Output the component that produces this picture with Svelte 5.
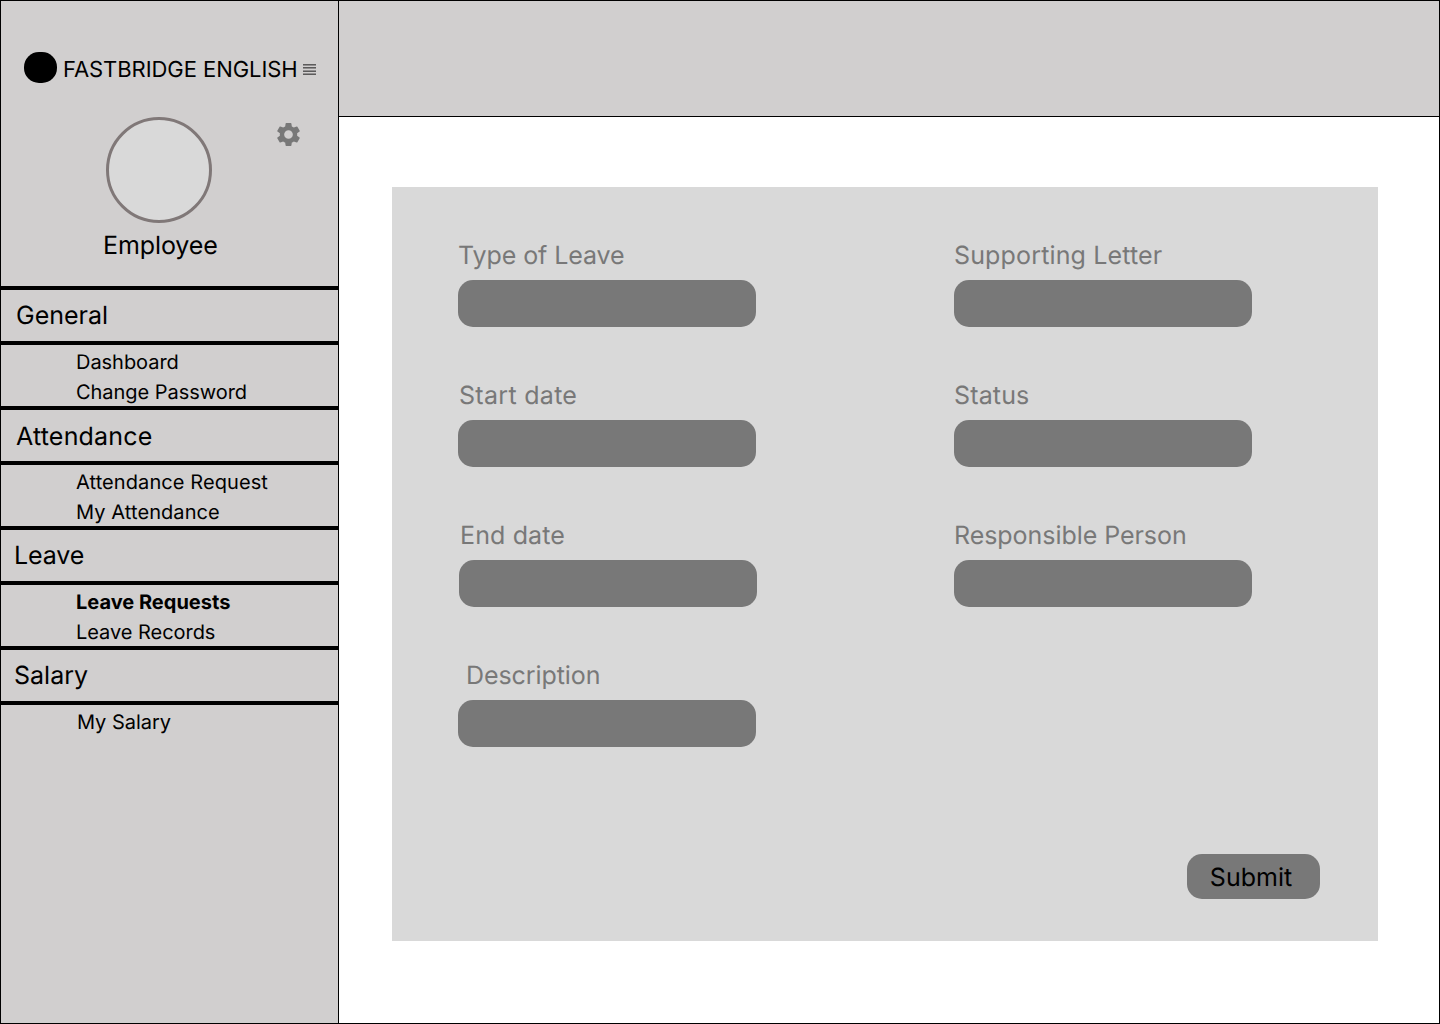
<script>
  const sections = [
    { title: 'General', kind: 'general', items: ['Dashboard', 'Change Password'] },
    { title: 'Attendance', kind: 'attendance', items: ['Attendance Request', 'My Attendance'] },
    { title: 'Leave', kind: 'leave', items: ['Leave Requests', 'Leave Records'] },
    { title: 'Salary', kind: 'salary', items: ['My Salary'] }
  ];
  const active = 'Leave Requests';

  const columns = [
    [
      { label: 'Type of Leave', kind: 'type' },
      { label: 'Start date', kind: 'start' },
      { label: 'End date', kind: 'end' },
      { label: 'Description', kind: 'description' }
    ],
    [
      { label: 'Supporting Letter', kind: 'letter' },
      { label: 'Status', kind: 'status' },
      { label: 'Responsible Person', kind: 'person' }
    ]
  ];
</script>

<div class="app">
  <aside class="sidebar">
    <div class="brand">
      <span class="logo"></span>
      <span class="name">FASTBRIDGE ENGLISH</span>
      <svg class="menu" width="13" height="12" viewBox="0 0 13 12" shape-rendering="crispEdges">
        <path d="M0 0h13v1H0zM0 3h13v1H0zM0 7h13v1H0zM0 10h13v1H0z" fill="#5c5b5b" />
        <path d="M0 1h13v1H0zM0 4h13v1H0zM0 6h13v1H0zM0 9h13v1H0z" fill="#918f90" />
      </svg>
    </div>
    <div class="profile">
      <div class="avatar"></div>
      <svg class="gear" width="29" height="29" viewBox="0 0 24 24">
        <path
          fill="#787878"
          d="M19.14 12.94c.04-.3.06-.61.06-.94 0-.32-.02-.64-.07-.94l2.03-1.58a.49.49 0 0 0 .12-.61l-1.92-3.32a.488.488 0 0 0-.59-.22l-2.39.96c-.5-.38-1.03-.7-1.62-.94l-.36-2.54a.484.484 0 0 0-.48-.41h-3.84c-.24 0-.43.17-.47.41l-.36 2.54c-.59.24-1.13.57-1.62.94l-2.39-.96c-.22-.08-.47 0-.59.22L2.74 8.87c-.12.21-.08.47.12.61l2.03 1.58c-.05.3-.09.63-.09.94s.02.64.07.94l-2.03 1.58a.49.49 0 0 0-.12.61l1.92 3.32c.12.22.37.29.59.22l2.39-.96c.5.38 1.03.7 1.62.94l.36 2.54c.05.24.24.41.48.41h3.84c.24 0 .44-.17.47-.41l.36-2.54c.59-.24 1.13-.56 1.62-.94l2.39.96c.22.08.47 0 .59-.22l1.92-3.32c.12-.22.07-.47-.12-.61l-2.01-1.58zM12 15.6A3.6 3.6 0 1 1 12 8.4a3.6 3.6 0 0 1 0 7.2z"
        />
      </svg>
    </div>
    <div class="role">Employee</div>
    <nav>
      {#each sections as section}
        <h2 class={section.kind}>{section.title}</h2>
        <ul class={section.kind}>
          {#each section.items as item}
            <li class:active={item === active}>{item}</li>
          {/each}
        </ul>
      {/each}
    </nav>
  </aside>

  <div class="content">
    <header></header>
    <main>
      <form onsubmit={(e) => e.preventDefault()}>
        <div class="fields">
          {#each columns as column}
            <div class="column">
              {#each column as field}
                <div class="field {field.kind}">
                  <label for={field.kind}>{field.label}</label>
                  <input id={field.kind} type="text" />
                </div>
              {/each}
            </div>
          {/each}
        </div>
        <button type="submit">Submit</button>
      </form>
    </main>
  </div>
</div>

<style>
  :global(body) {
    margin: 0;
    background: #fff;
  }
  .app,
  .app * {
    box-sizing: border-box;
  }
  .app {
    display: flex;
    width: 1440px;
    height: 1024px;
    border: 1px solid #000;
    background: #fff;
    color: #000;
    font-family: Inter, sans-serif;
    font-size: 25px;
    line-height: 32px;
    text-rendering: geometricPrecision;
    overflow: hidden;
  }
  .sidebar {
    width: 338px;
    flex: none;
    background: #d1cfcf;
    border-right: 1px solid #000;
  }
  .brand {
    display: flex;
    align-items: flex-start;
    height: 116px;
    padding: 51px 0 0 23px;
  }
  .logo {
    width: 33px;
    height: 31px;
    border-radius: 15px;
    background: #000;
  }
  .name {
    width: 240px;
    margin: 5px 0 0 6px;
    font-size: 22px;
    line-height: 27px;
    letter-spacing: -0.06px;
    white-space: nowrap;
  }
  .menu {
    margin-top: 12px;
  }
  .profile {
    display: flex;
    align-items: flex-start;
    height: 113px;
    padding-left: 105px;
  }
  .avatar {
    width: 106px;
    height: 106px;
    border: 3px solid #807878;
    border-radius: 50%;
    background: #d9d9d9;
  }
  .gear {
    margin: 3px 0 0 62px;
  }
  .role {
    height: 56px;
    padding-left: 102px;
    letter-spacing: -0.1px;
  }
  h2 {
    height: 59px;
    margin: 0;
    padding: 10px 0 0 15px;
    border-top: 4px solid #000;
    border-bottom: 4px solid #000;
    font: inherit;
  }
  h2.attendance {
    padding-top: 11px;
    letter-spacing: 0.2px;
  }
  h2.leave,
  h2.salary {
    padding-left: 13px;
  }
  h2.leave {
    letter-spacing: -0.1px;
  }
  ul {
    height: 61px;
    margin: 0;
    padding: 2px 0 0 75px;
    list-style: none;
    font-size: 20px;
    line-height: 30px;
    letter-spacing: -0.04px;
  }
  ul.attendance {
    letter-spacing: 0.09px;
  }
  ul.salary {
    padding-left: 76px;
  }
  .active {
    font-weight: 700;
    letter-spacing: 0;
  }
  .content {
    display: flex;
    flex: 1;
    flex-direction: column;
  }
  header {
    height: 116px;
    flex: none;
    background: #d1cfcf;
    border-bottom: 1px solid #000;
  }
  main {
    padding: 70px 61px 0 53px;
  }
  form {
    display: flex;
    flex-direction: column;
    height: 754px;
    padding: 53px 58px 42px 66px;
    background: #d9d9d9;
    color: #787878;
  }
  .fields {
    display: flex;
    gap: 198px;
  }
  .column {
    display: flex;
    flex-direction: column;
    gap: 63px;
    width: 298px;
  }
  .field {
    display: flex;
    flex-direction: column;
    gap: 8px;
    height: 77px;
  }
  .field.end {
    padding-left: 1px;
    width: 299px;
  }
  label {
    height: 32px;
    white-space: nowrap;
  }
  .type label {
    letter-spacing: -0.08px;
  }
  .start label {
    padding-left: 1px;
    letter-spacing: 0.3px;
  }
  .end label {
    padding-left: 1px;
    letter-spacing: 0.13px;
  }
  .description label {
    padding-left: 8px;
    letter-spacing: -0.08px;
  }
  .letter label,
  .status label {
    letter-spacing: 0.15px;
  }
  .person label {
    letter-spacing: -0.05px;
  }
  input {
    width: 100%;
    height: 47px;
    flex: none;
    padding: 0 14px;
    border: 0;
    border-radius: 15px;
    background: #787878;
    font: inherit;
  }
  button {
    align-self: flex-end;
    width: 133px;
    height: 45px;
    margin-top: auto;
    padding: 2px 5px 0 0;
    border: 0;
    border-radius: 15px;
    background: #787878;
    color: #000;
    font: inherit;
    text-rendering: inherit;
  }
</style>
